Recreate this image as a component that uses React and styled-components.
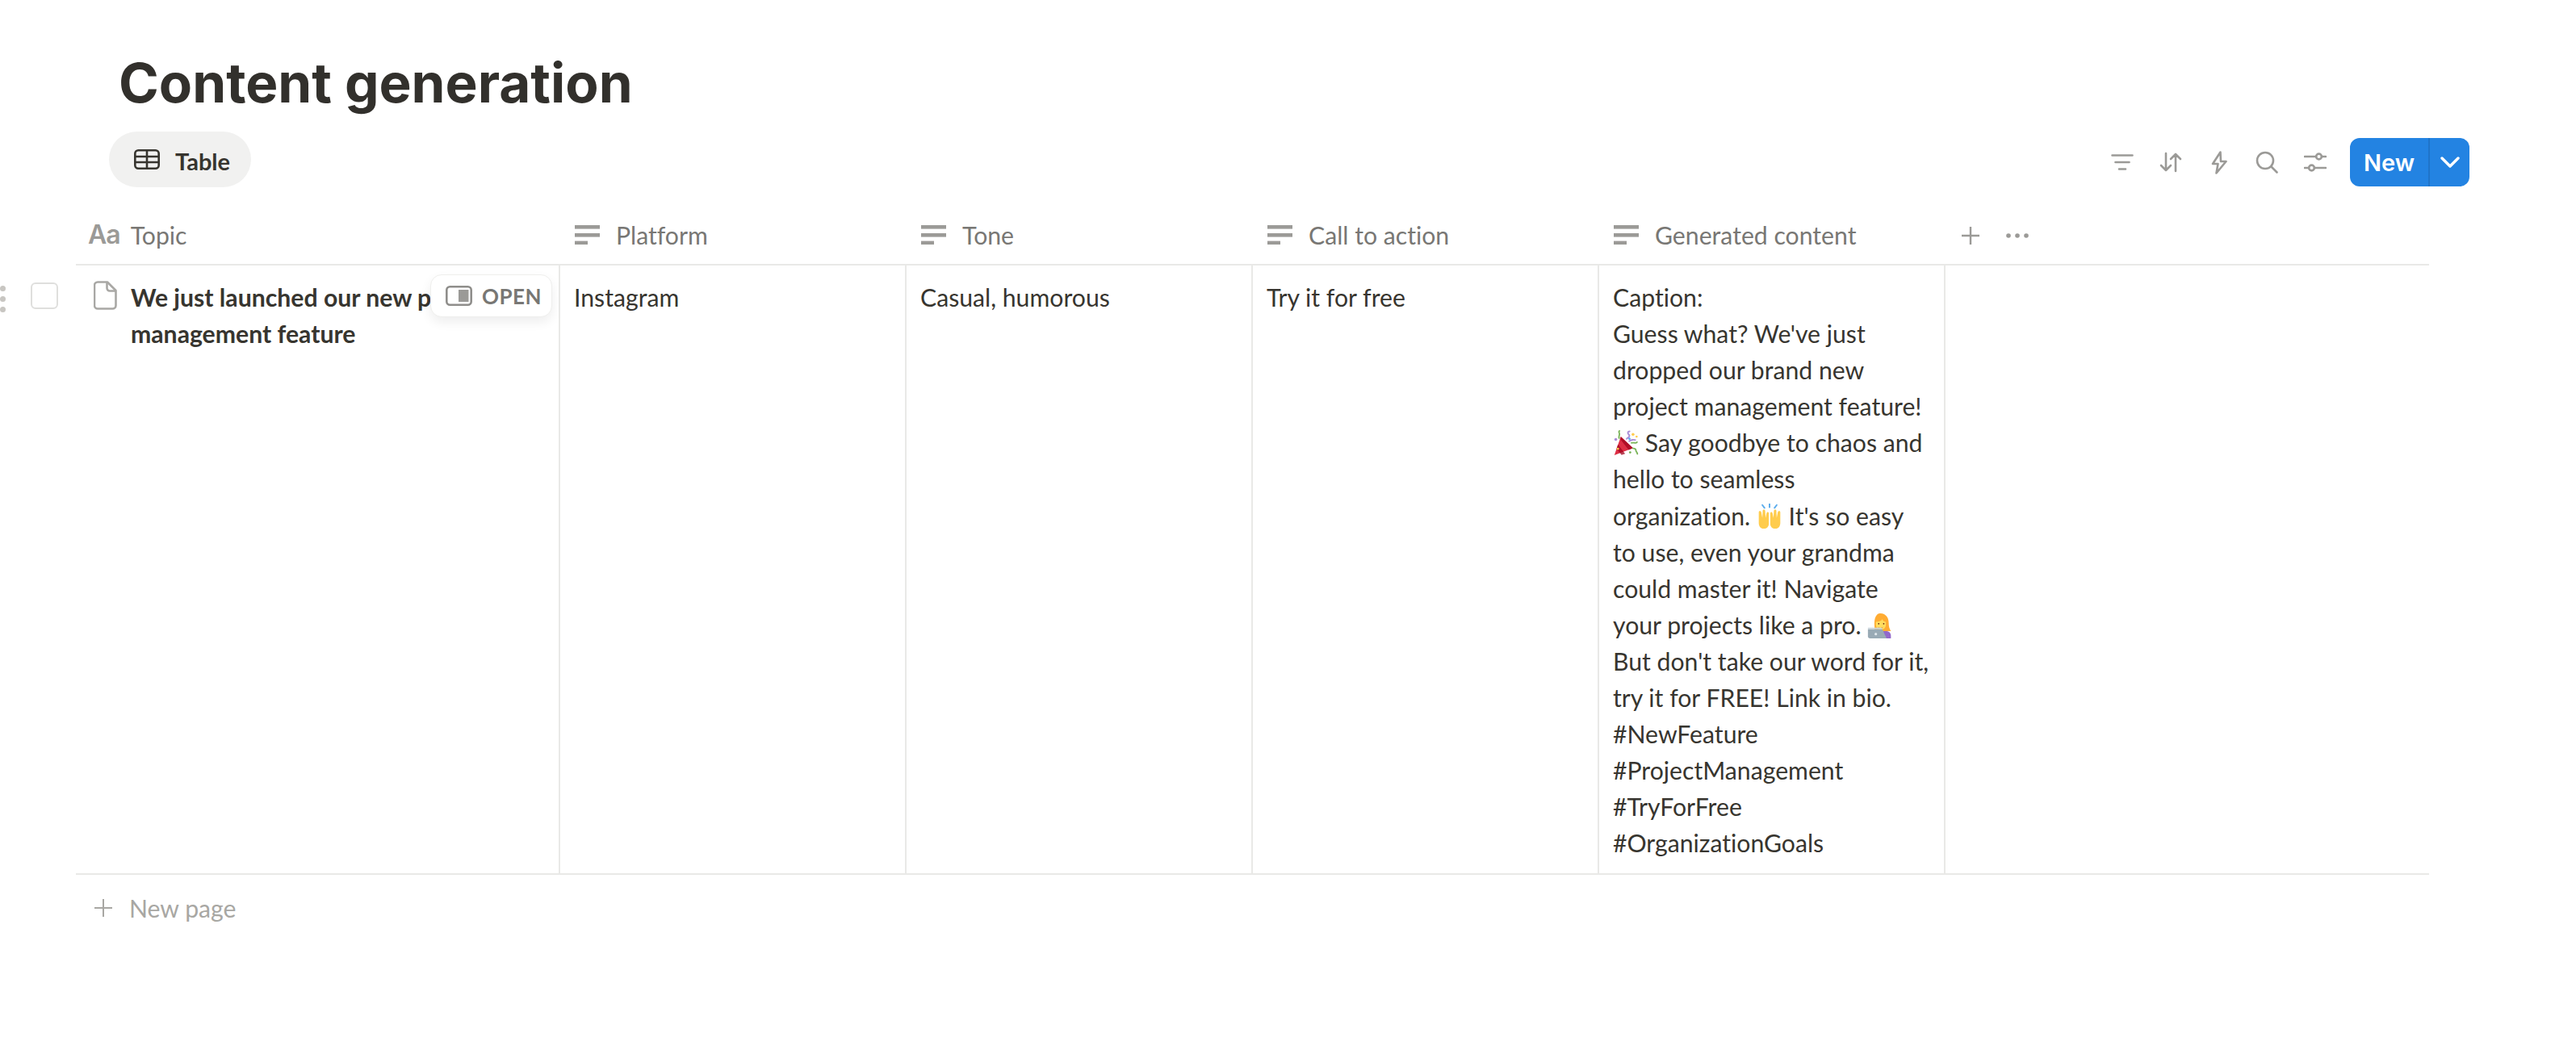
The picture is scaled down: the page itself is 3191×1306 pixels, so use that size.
import React from "react";
import styled, { createGlobalStyle } from "styled-components";

const Global = createGlobalStyle`
  html, body { margin: 0; padding: 0; background: #fff; }
  body { font-family: Lato, Inter, "Liberation Sans", sans-serif; font-variant-ligatures: none; color: #37352f; overflow: hidden; }
`;

const Page = styled.div`
  width: 3191px;
  height: 1306px;
  background: #fff;
  display: flex;
  flex-direction: column;
`;

const Title = styled.h1`
  margin: 0;
  padding: 63px 0 20px 147px;
  font-family: Inter, sans-serif;
  font-size: 67.4px;
  line-height: 80px;
  font-weight: 700;
  color: #32302c;
`;

const Toolbar = styled.div`
  height: 69px;
  padding: 0 132px 0 135px;
  display: flex;
  align-items: center;
  justify-content: space-between;
`;

const ViewTab = styled.div`
  width: 176px;
  height: 69px;
  box-sizing: border-box;
  padding-left: 31px;
  border-radius: 35px;
  background: #f1f1f0;
  display: flex;
  align-items: center;
  gap: 19px;
  font-size: 29px;
  font-weight: 700;
  color: #37352f;
`;

const TabLabel = styled.span`
  padding-top: 3px;
`;

const Actions = styled.div`
  display: flex;
  align-items: center;
  padding-top: 7px;
`;

const ActionIcon = styled.div`
  width: 59.7px;
  height: 60px;
  display: flex;
  align-items: center;
  justify-content: center;
  color: #9b9a97;
`;

const NewButton = styled.div`
  margin-left: 13px;
  width: 148px;
  height: 60px;
  border-radius: 12px;
  background: #2383e2;
  color: #fff;
  display: flex;
  font-family: Inter, sans-serif;
  font-size: 29px;
  font-weight: 600;
`;

const NewLabel = styled.div`
  width: 97px;
  display: flex;
  align-items: center;
  justify-content: center;
  border-right: 2px solid #1f74c9;
`;

const NewChevron = styled.div`
  flex: 1;
  display: flex;
  align-items: center;
  justify-content: center;
`;

const Table = styled.div`
  margin-top: 34px;
  display: flex;
  flex-direction: column;
`;

const Row = styled.div`
  display: flex;
`;

const Gutter = styled.div`
  width: 94px;
  flex: none;
  position: relative;
`;

const Cells = styled.div`
  width: 2915px;
  display: flex;
  border-bottom: 2px solid #e9e9e7;
  box-sizing: border-box;
`;

const HeadCell = styled.div`
  width: ${(p) => p.$w}px;
  height: 61px;
  flex: none;
  box-sizing: border-box;
  display: flex;
  align-items: center;
  padding: 0 0 12px ${(p) => p.$pad}px;
  gap: ${(p) => p.$gap}px;
  font-size: 30.2px;
  color: #787774;
`;

const TypeGlyph = styled.span`
  font-family: Inter, sans-serif;
  font-size: 32px;
  font-weight: 600;
  color: #9b9a97;
  letter-spacing: -1px;
`;

const HeadTools = styled.div`
  display: flex;
  align-items: center;
  height: 61px;
  padding: 0 0 10px 19px;
  box-sizing: border-box;
  gap: 32px;
  color: #9b9a97;
`;

const Cell = styled.div`
  width: ${(p) => p.$w}px;
  flex: none;
  box-sizing: border-box;
  padding: 17px 16px 14px 17px;
  border-right: 2px solid #e9e9e7;
  font-size: 30.2px;
  line-height: 45.1px;
  color: #37352f;
  position: relative;
`;

const TitleCell = styled(Cell)`
  padding-left: 22px;
  padding-right: 0;
  display: flex;
  gap: 17px;
  font-weight: 700;
  overflow: hidden;
`;

const FileGlyph = styled.div`
  flex: none;
  height: 40px;
  display: flex;
  align-items: center;
  color: #a9a8a5;
`;

const OpenButton = styled.div`
  position: absolute;
  left: 439px;
  top: 11px;
  width: 151px;
  height: 53px;
  box-sizing: border-box;
  padding-left: 18px;
  border-radius: 14px;
  background: #fff;
  border: 1px solid #efefed;
  box-shadow: 0 6px 14px rgba(15, 15, 15, 0.07);
  display: flex;
  align-items: center;
  gap: 12px;
  font-size: 26px;
  line-height: 1;
  font-weight: 700;
  letter-spacing: 0.5px;
  color: #787774;
`;

const Handle = styled.div`
  position: absolute;
  left: 0;
  top: 25px;
  display: flex;
  flex-direction: column;
  gap: 6px;
`;

const HandleDot = styled.span`
  width: 7px;
  height: 7px;
  border-radius: 50%;
  background: #c8c6c2;
`;

const Check = styled.div`
  position: absolute;
  left: 38px;
  top: 21px;
  width: 34px;
  height: 33px;
  box-sizing: border-box;
  border: 2px solid #dfdfdd;
  border-radius: 6px;
`;

const Fill = styled.div`
  flex: 1;
`;

const Emoji = styled.svg`
  width: 32px;
  height: 32px;
  vertical-align: -5px;
`;

const AddPage = styled.div`
  margin-left: 94px;
  padding: 19px 0 0 22px;
  display: flex;
  align-items: center;
  gap: 20px;
  font-size: 30.2px;
  line-height: 45px;
  color: #a8a7a3;
`;

const Plus = ({ size = 24, w = 2.4 }) => (
  <svg width={size} height={size} viewBox="0 0 24 24" fill="none" stroke="currentColor" strokeWidth={w}>
    <path d="M12 1v22M1 12h22" />
  </svg>
);

const LinesIcon = () => (
  <svg width="31" height="24" viewBox="0 0 31 24" fill="#9b9a97">
    <rect x="0" y="0" width="31" height="4.6" />
    <rect x="0" y="10" width="31" height="4.6" />
    <rect x="0" y="19.6" width="16" height="4.4" />
  </svg>
);

const stroke = { fill: "none", stroke: "currentColor", strokeWidth: 2.6, strokeLinecap: "round", strokeLinejoin: "round" };

const Filter = () => (
  <svg width="28" height="22" viewBox="0 0 28 22" {...stroke}>
    <path d="M1.5 2.5h25M5.5 11h17M10 19.5h8" />
  </svg>
);
const Sort = () => (
  <svg width="28" height="26" viewBox="0 0 28 26" {...stroke}>
    <path d="M8 2v21M2 17l6 6 6-6M20 24V3M14 9l6-6 6 6" />
  </svg>
);
const Bolt = () => (
  <svg width="20" height="29" viewBox="0 0 20 29" {...stroke}>
    <path d="M11.5 1.5 2 16h6.5l-2 11.5L18.5 13H12z" />
  </svg>
);
const Search = () => (
  <svg width="28" height="28" viewBox="0 0 28 28" {...stroke}>
    <circle cx="12" cy="12" r="10" />
    <path d="m19.5 19.5 7 7" />
  </svg>
);
const Sliders = () => (
  <svg width="28" height="24" viewBox="0 0 28 24" {...stroke}>
    <path d="M1 5h14M22 5h5M1 19h5M13 19h14" />
    <circle cx="18.5" cy="5" r="3.4" />
    <circle cx="9.5" cy="19" r="3.4" />
  </svg>
);
const Chevron = () => (
  <svg width="24" height="14" viewBox="0 0 24 14" fill="none" stroke="#fff" strokeWidth="3.4" strokeLinecap="round" strokeLinejoin="round">
    <path d="m2 2 10 10L22 2" />
  </svg>
);
const TableIcon = () => (
  <svg width="32" height="25" viewBox="0 0 32 25" fill="none" stroke="#37352f" strokeWidth="2.6" strokeLinejoin="round">
    <rect x="1.3" y="1.3" width="29.4" height="22.4" rx="4" />
    <path d="M1.3 9h29.4M1.3 16h29.4M16 1.3v22.4" />
  </svg>
);
const FileIcon = () => (
  <svg width="29" height="36" viewBox="0 0 29 36" fill="none" stroke="currentColor" strokeWidth="2.6" strokeLinejoin="round">
    <path d="M5 1.500h12L27.500 12v18.500a4 4 0 0 1-4 4H5a4 4 0 0 1-4-4v-25a4 4 0 0 1 4-4z" />
    <path d="M16.500 1.500V9a3.500 3.500 0 0 0 3.500 3.500h8" />
  </svg>
);
const PeekIcon = () => (
  <svg width="33" height="25" viewBox="0 0 33 25">
    <rect x="1.3" y="1.3" width="30.4" height="22.4" rx="4" fill="none" stroke="#8f8e8b" strokeWidth="2.6" />
    <rect x="16" y="5" width="12.5" height="15" fill="#9b9a97" />
  </svg>
);

const Party = () => (
  <Emoji viewBox="0 0 36 36">
    <path d="M2 35 11 9 28 25z" fill="#dd2e44" />
    <path d="m7 20 10 13-5 1.600L5 26zM11 9l17 16-6 2.600L10.500 13z" fill="#a0041e" opacity=".75" />
    <path d="M9 12c-2-4 1-5 0-7.500S8 1 10 1" fill="none" stroke="#77b255" strokeWidth="2" />
    <path d="M19 13c0-3 4-2 4-5s-3-2-2-5c.5-1.300 2-1.500 3-1" fill="none" stroke="#aa8dd8" strokeWidth="2.2" />
    <path d="M25 18c3-2 8 2 9-2M27 25c2 1 5 0 5 3s3 3 2 6" fill="none" stroke="#77b255" strokeWidth="2" />
    <path d="M22 16c3-3 8-3 10-2" fill="none" stroke="#aa8dd8" strokeWidth="2" />
    <circle cx="4" cy="13" r="2" fill="#aa8dd8" />
    <circle cx="7" cy="26" r="1.6" fill="#ffcc4d" />
    <circle cx="28" cy="6" r="2" fill="#ffcc4d" />
    <circle cx="33" cy="9" r="1.5" fill="#ffcc4d" />
    <circle cx="23" cy="12" r="1.6" fill="#55acee" />
    <circle cx="24" cy="31" r="1.6" fill="#77b255" />
  </Emoji>
);
const Hands = () => (
  <Emoji viewBox="0 0 36 36">
    <path d="M3 12c0-2 3-2 3.500 0l1.500 8 .5-10c0-2 3-2 3.400 0l.6 10 1.500-7c.5-2 3-1.500 3 .5L17 28c0 4-3 7-7 7-5 0-7-4-7-8z" fill="#ffcc4d" />
    <path d="M33 12c0-2-3-2-3.500 0L28 20l-.5-10c0-2-3-2-3.400 0l-.6 10-1.500-7c-.5-2-3-1.500-3 .5L19 28c0 4 3 7 7 7 5 0 7-4 7-8z" fill="#ffcc4d" />
    <path d="M8 2l3 4M18 0v5M28 2l-3 4" stroke="#5dadec" strokeWidth="2.2" strokeLinecap="round" />
  </Emoji>
);
const Tech = () => (
  <Emoji viewBox="0 0 36 36">
    <path d="M18 1c8 0 12 6 12 14 0 6 2 9 3 11H9c2-4 1-6 1-11 0-8 3-14 8-14z" fill="#ffac33" />
    <path d="M12 13c3 0 8-1 9-4 1 3 3 4 5 4v4c0 4-3 7-6.500 7S12 21 12 17z" fill="#ffdc5d" />
    <path d="M19 26h7c5 0 7 3 7 7v3H19z" fill="#9268ca" />
    <path d="M15 20c2 2 5 2 7 0-1 3-6 3-7 0z" fill="#c1694f" />
    <circle cx="16" cy="15.5" r="1" fill="#662113" />
    <circle cx="23" cy="15.5" r="1" fill="#662113" />
    <path d="M1 23h20l6 13H4c-2 0-3-1-3-3z" fill="#99aab5" />
    <path d="M1 21h18c1 0 2 1 2 2H1z" fill="#ccd6dd" />
    <circle cx="12" cy="30" r="1.8" fill="#e1e8ed" />
  </Emoji>
);

const columns = [
  { name: "Platform", text: "Instagram" },
  { name: "Tone", text: "Casual, humorous" },
  { name: "Call to action", text: "Try it for free" },
];

export default function App() {
  return (
    <Page>
      <Global />
      <Title>Content generation</Title>
      <Toolbar>
        <ViewTab>
          <TableIcon />
          <TabLabel>Table</TabLabel>
        </ViewTab>
        <Actions>
          <ActionIcon><Filter /></ActionIcon>
          <ActionIcon><Sort /></ActionIcon>
          <ActionIcon><Bolt /></ActionIcon>
          <ActionIcon><Search /></ActionIcon>
          <ActionIcon><Sliders /></ActionIcon>
          <NewButton>
            <NewLabel>New</NewLabel>
            <NewChevron><Chevron /></NewChevron>
          </NewButton>
        </Actions>
      </Toolbar>
      <Table>
        <Row>
          <Gutter />
          <Cells>
            <HeadCell $w={600} $pad={15} $gap={13}>
              <TypeGlyph>Aa</TypeGlyph>Topic
            </HeadCell>
            {columns.map((c) => (
              <HeadCell key={c.name} $w={429} $pad={18} $gap={20}>
                <LinesIcon />
                {c.name}
              </HeadCell>
            ))}
            <HeadCell $w={429} $pad={18} $gap={20}>
              <LinesIcon />
              Generated content
            </HeadCell>
            <HeadTools>
              <Plus />
              <svg width="28" height="6" viewBox="0 0 28 6" fill="currentColor">
                <circle cx="3" cy="3" r="2.8" />
                <circle cx="14" cy="3" r="2.8" />
                <circle cx="25" cy="3" r="2.8" />
              </svg>
            </HeadTools>
          </Cells>
        </Row>
        <Row>
          <Gutter>
            <Handle>
              <HandleDot />
              <HandleDot />
              <HandleDot />
            </Handle>
            <Check />
          </Gutter>
          <Cells>
            <TitleCell $w={600}>
              <FileGlyph><FileIcon /></FileGlyph>
              <span>We just launched our new project management feature</span>
              <OpenButton>
                <PeekIcon />
                OPEN
              </OpenButton>
            </TitleCell>
            {columns.map((c) => (
              <Cell key={c.name} $w={429}>{c.text}</Cell>
            ))}
            <Cell $w={429}>
              Caption:
              <br />
              Guess what? We've just dropped our brand new project management feature! <Party /> Say goodbye to chaos and hello to seamless organization. <Hands /> It's so easy to use, even your grandma could master it! Navigate your projects like a pro. <Tech /> But don't take our word for it, try it for FREE! Link in bio.
              <br />
              #NewFeature
              <br />
              #ProjectManagement
              <br />
              #TryForFree
              <br />
              #OrganizationGoals
            </Cell>
            <Fill />
          </Cells>
        </Row>
        <AddPage>
          <Plus size={24} w={2} />
          New page
        </AddPage>
      </Table>
    </Page>
  );
}
